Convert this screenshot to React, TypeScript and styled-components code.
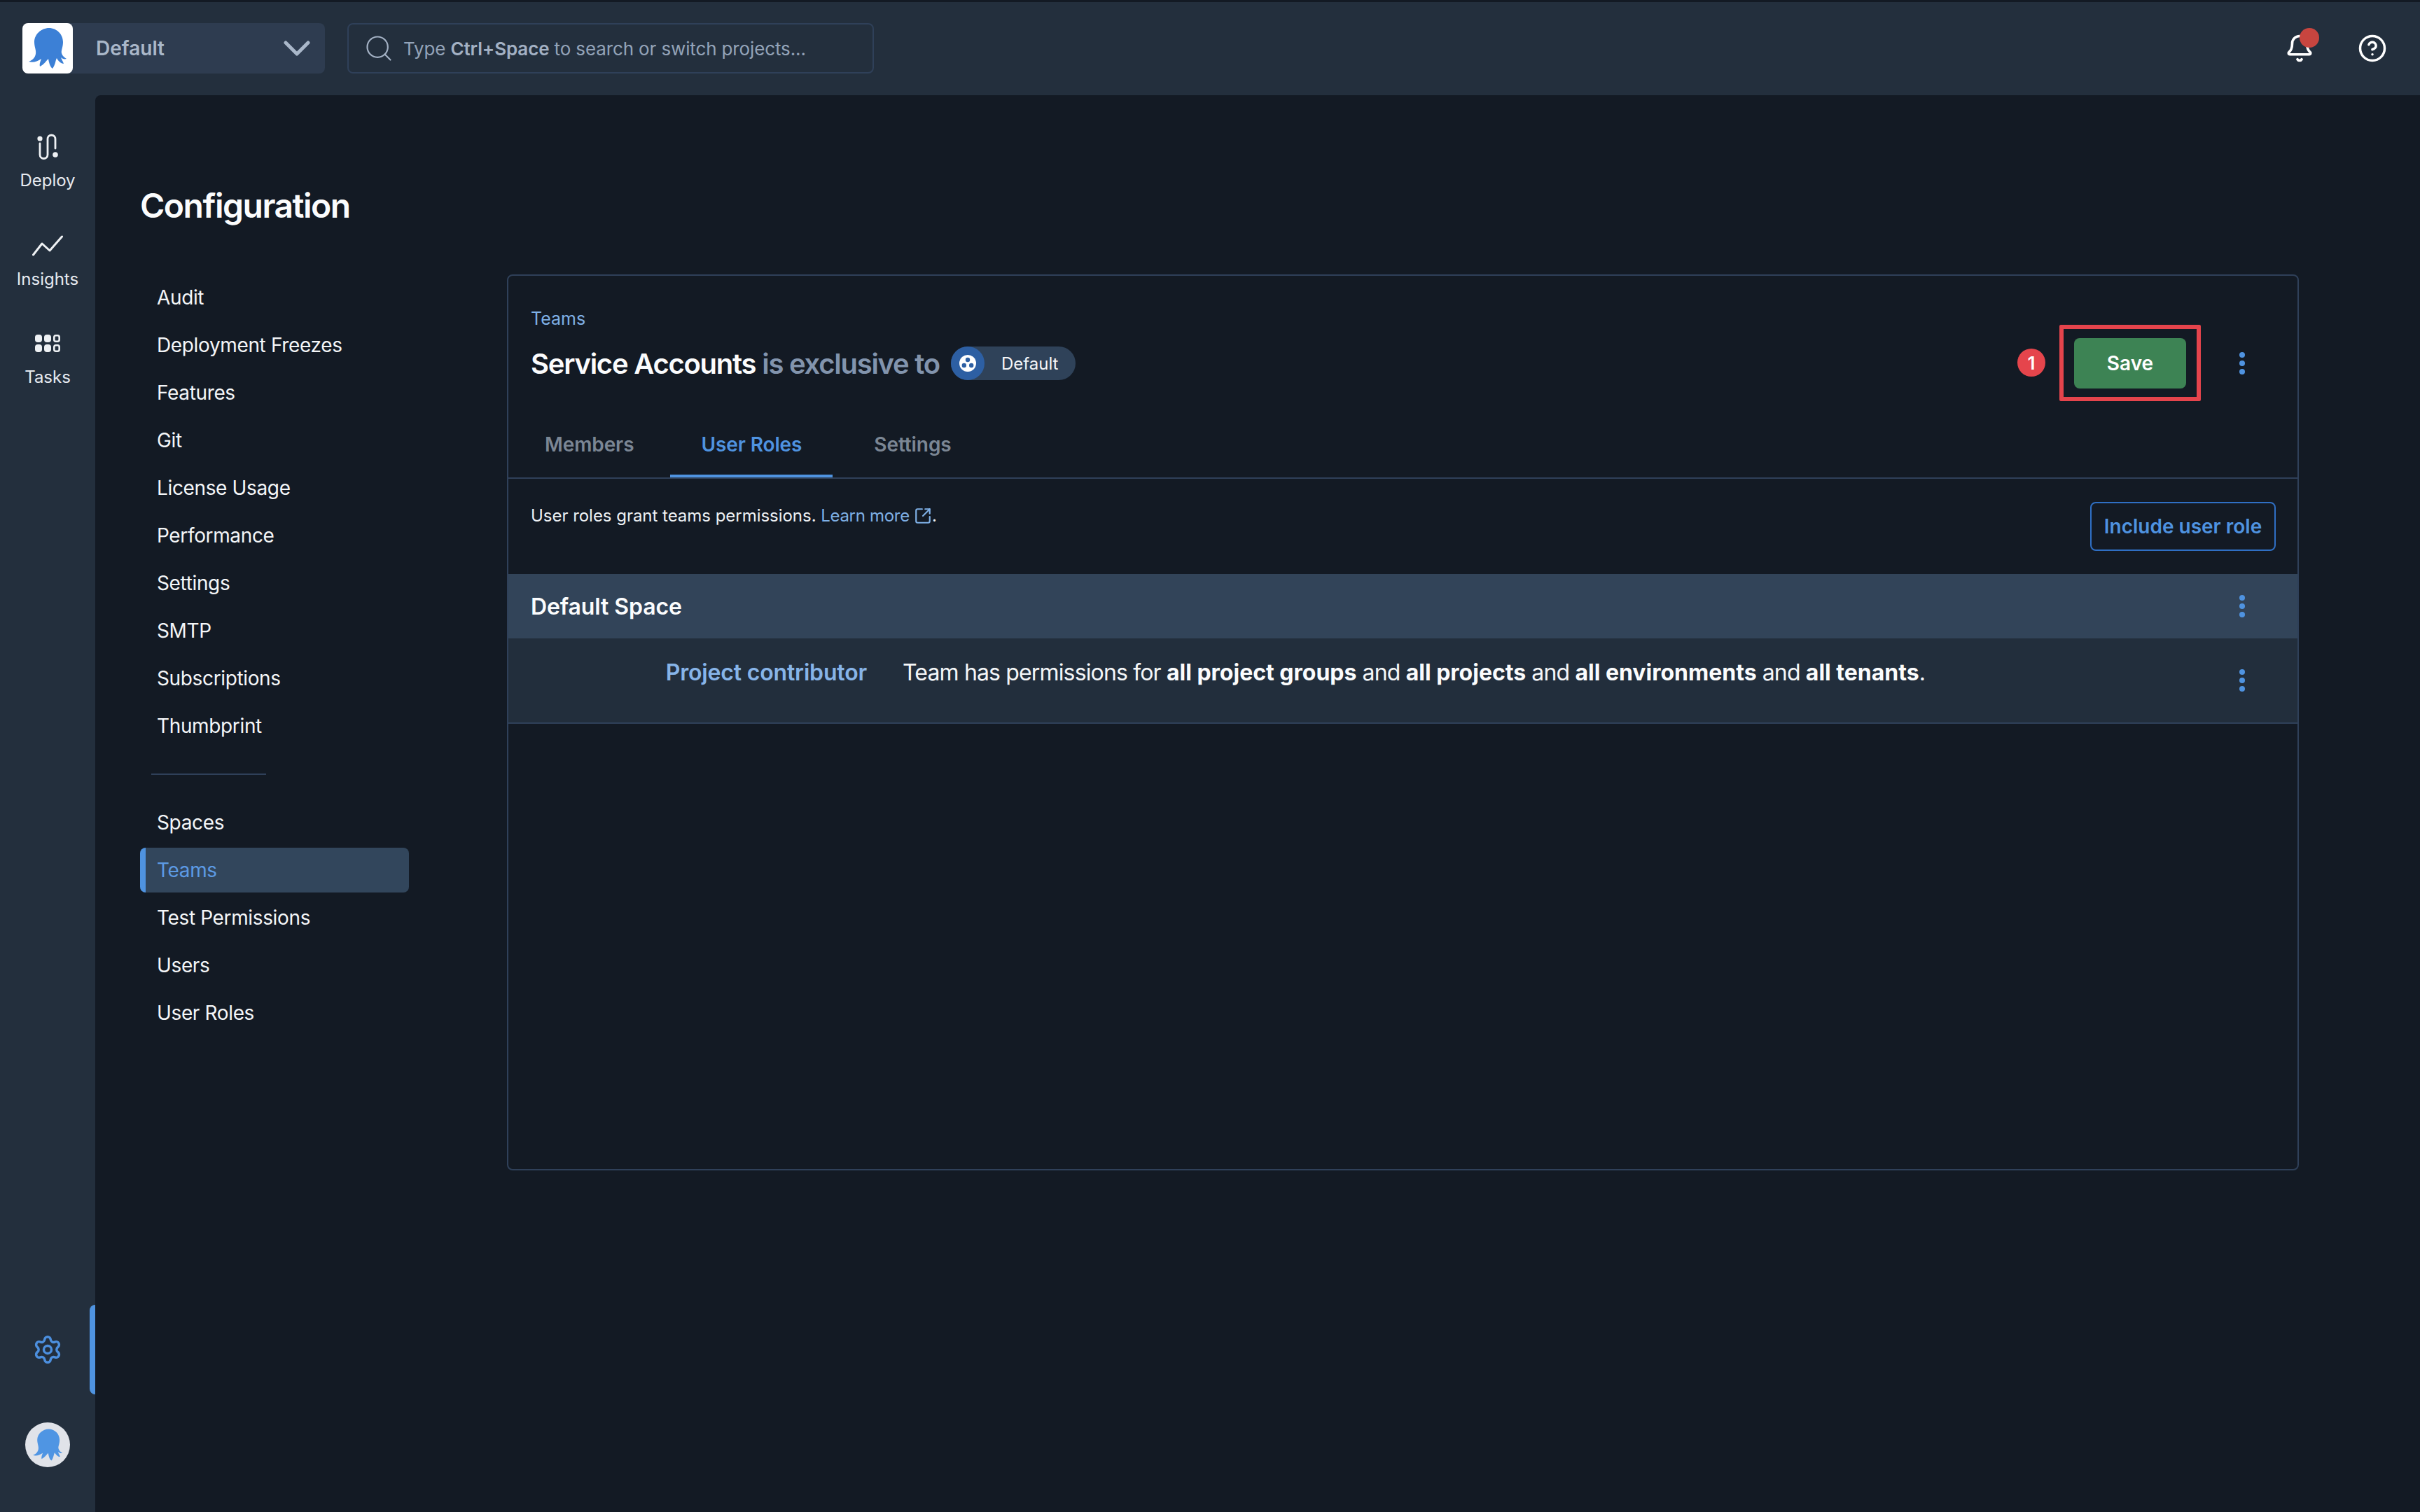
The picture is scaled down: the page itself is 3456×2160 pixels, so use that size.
import React from "react";
import styled, { createGlobalStyle } from "styled-components";
import { Bell, CircleHelp, Search, Settings, SquareArrowOutUpRight } from "lucide-react";

const Global = createGlobalStyle`
  html, body { margin: 0; padding: 0; background: #131a24; }
  body { font-family: Inter, "Liberation Sans", sans-serif; color: #f4f6f8; overflow: hidden; }
  * { box-sizing: border-box; }
`;

const Shell = styled.div`
  width: 3456px; height: 2160px; display: grid;
  grid-template-columns: 136px 1fr; grid-template-rows: 136px 1fr;
  background: #232f3d;
`;
const TopBar = styled.header`
  grid-column: 1 / 3; display: flex; align-items: center; padding: 0 47px 1px 32px;
  border-top: 3px solid #131a24; height: 136px;
`;
const LogoBox = styled.div`
  width: 72px; height: 72px; background: #fff; border-radius: 8px; flex: none; position: relative; z-index: 1;
`;
const Switcher = styled.div`
  width: 376px; height: 72px; margin-left: -16px; background: #2e3c50; border-radius: 0 8px 8px 0;
  display: flex; align-items: center; justify-content: space-between; padding: 0 21px 0 49px;
  color: #a9b7c9; font-size: 28px; font-weight: 600;
`;
const SearchBox = styled.div`
  width: 752px; height: 72px; margin-left: 32px; border: 2px solid #2f4059; border-radius: 8px;
  display: flex; align-items: center; padding: 0 0 0 21px; gap: 13px; color: #93a3b8; font-size: 26px; letter-spacing: -0.13px;
  b { font-weight: 600; color: #a3b1c4; }
`;
const RightIcons = styled.div`
  margin-left: auto; display: flex; align-items: center; gap: 62px; color: #fff;
`;
const BellWrap = styled.div`
  position: relative; width: 42px; height: 42px; display: flex;
  &::after { content: ""; position: absolute; width: 28px; height: 28px; border-radius: 50%; background: #c8453f; right: -7px; top: -8px; }
`;

const SideBar = styled.nav`
  display: flex; flex-direction: column; align-items: center; position: relative;
`;
const SideItem = styled.div<{ $top: number }>`
  margin-top: ${(p) => p.$top}px; display: flex; flex-direction: column; align-items: center; gap: 13px;
  font-size: 24px; color: #e6eaf0; line-height: 30px; width: 100%;
`;
const SideIcon = styled.svg<{ $w?: number }>`
  width: ${(p) => p.$w ?? 40}px; height: 40px; display: block; color: #eef1f4;
`;
const SettingsLink = styled.div`
  margin-top: auto; height: 128px; width: 100%; display: flex; align-items: center; justify-content: center; position: relative;
  color: #4c8fde;
  &::after { content: ""; position: absolute; right: 0; top: 0; bottom: 0; width: 8px; background: #4f93e0; border-radius: 8px 0 0 8px; }
`;
const Avatar = styled.div`
  width: 64px; height: 64px; border-radius: 50%; background: #e0e3e9; margin: 40px 0 64px;
  display: flex; align-items: center; justify-content: center;
`;

const Main = styled.main`
  background: #131a24; border-radius: 8px 0 0 0; padding: 132px 0 0 64px; min-width: 0;
`;
const PageTitle = styled.h1`
  margin: 0; font-size: 48px; line-height: 52px; font-weight: 600; color: #fbfcfd; letter-spacing: -1.5px;
`;
const Columns = styled.div`
  display: flex; margin-top: 73px; align-items: flex-start;
`;
const ConfigNav = styled.div`
  width: 384px; display: flex; flex-direction: column; gap: 4px; flex: none;
`;
const NavItem = styled.div<{ $active?: boolean }>`
  height: 64px; display: flex; align-items: center; font-size: 28px; padding-left: 16px; letter-spacing: -0.36px;
  border-left: 8px solid ${(p) => (p.$active ? "#4f93e0" : "transparent")};
  border-radius: 8px; color: ${(p) => (p.$active ? "#5c9ae4" : "#f4f6f8")};
  background: ${(p) => (p.$active ? "#32465c" : "transparent")};
`;
const NavDivider = styled.div`
  height: 2px; width: 164px; margin: 32px 0 32px 16px; background: #2f4059;
`;

const Card = styled.section`
  width: 2559px; height: 1280px; margin: -1px 0 0 140px; border: 2px solid #2f4059; border-radius: 8px; flex: none; display: flex; flex-direction: column;
`;
const CardHead = styled.div`
  padding: 46px 0 0 32px;
`;
const Crumb = styled.div`
  font-size: 25px; line-height: 30px; color: #7fb0e6;
`;
const TitleRow = styled.div`
  display: flex; align-items: center; height: 72px; margin-top: 13px;
`;
const Heading = styled.h2`
  margin: 0; font-size: 40px; font-weight: 600; color: #fbfcfd; letter-spacing: -1.25px; white-space: nowrap;
  span { color: #8294ad; }
`;
const Pill = styled.div`
  margin-left: 16px; height: 48px; width: 178px; border-radius: 24px; background: #2f4259; display: flex; align-items: center;
  color: #f4f6f8; font-size: 24px; gap: 24px;
`;
const PillIcon = styled.div`
  width: 48px; height: 48px; border-radius: 50%; background: #2d5fa3; display: flex; align-items: center; justify-content: center; flex: none;
`;
const Actions = styled.div`
  margin-left: auto; display: flex; align-items: center; padding-right: 55px;
`;
const Badge = styled.div`
  width: 40px; height: 40px; border-radius: 50%; background: #e5454c; color: #fff; font-weight: 600; font-size: 26px;
  display: flex; align-items: center; justify-content: center; margin: -2px 41px 0 0;
`;
const SaveWrap = styled.div`
  position: relative; margin-right: 56px;
  &::after { content: ""; position: absolute; inset: -19px -21px -18px; border: 6px solid #e5444c; border-radius: 2px; pointer-events: none; }
`;
const SaveButton = styled.button`
  width: 160px; height: 72px; background: #3d8354; border: 0; border-radius: 8px; color: #fff; font: 600 28px Inter, sans-serif; display: block;
`;
const More = styled.svg`
  width: 48px; height: 48px; flex: none; display: block; color: #4f93e0;
`;
const Tabs = styled.div`
  display: flex; height: 96px; margin-top: 33px; padding-left: 8px; gap: 8px; border-bottom: 2px solid #2f4059;
`;
const Tab = styled.div<{ $active?: boolean }>`
  height: 94px; padding: 4px 44px 0; display: flex; align-items: center; font-size: 28px; font-weight: 600; letter-spacing: -0.1px;
  color: ${(p) => (p.$active ? "#4f93e0" : "#7b8694")};
  border-bottom: 4px solid ${(p) => (p.$active ? "#4f93e0" : "transparent")};
  &:last-child { margin-left: 7px; }
`;
const Toolbar = styled.div`
  height: 136px; display: flex; justify-content: space-between; padding: 33px 31px 0 32px; align-items: flex-start;
`;
const Hint = styled.div`
  font-size: 24px; line-height: 34px; margin-top: 3px; color: #eef1f4; display: flex; align-items: center; white-space: pre; letter-spacing: -0.03px;
  a { color: #7fb0e6; display: inline-flex; align-items: center; gap: 6px; letter-spacing: -0.3px; }
`;
const OutlineButton = styled.button`
  width: 265px; height: 70px; background: transparent; border: 2px solid #2f6fc4; border-radius: 8px; color: #4f93e0; font: 600 28px Inter, sans-serif;
`;
const SpaceHeader = styled.div`
  height: 92px; background: #324459; display: flex; align-items: center; justify-content: space-between; padding: 0 55px 0 32px;
  font-size: 32px; font-weight: 600; color: #fbfcfd; letter-spacing: -0.1px;
`;
const RoleRow = styled.div`
  height: 122px; background: #222e3c; border-bottom: 2px solid #2f4059; display: flex; align-items: flex-start; padding-right: 55px;
`;
const RoleName = styled.div`
  width: 512px; flex: none; text-align: right; margin-top: 29px; font-size: 32px; line-height: 40px; font-weight: 600; color: #87b4e8; white-space: nowrap; letter-spacing: -0.17px;
`;
const RoleDesc = styled.div`
  margin: 29px 0 0 51px; flex: 1; font-size: 32px; line-height: 40px; color: #f4f6f8; white-space: nowrap; letter-spacing: -0.85px;
  b { font-weight: 700; color: #fbfcfd; letter-spacing: 0; }
`;
const RoleMore = styled.div`
  margin-top: 36px;
`;

const OCTOPUS = "M38 7C49 7 58 16 58 27C58 35 55 39 56 43C57 47 60 49 63 51C60 52 57 51 55 49C56 52 58 55 59 58C55 58 51 54 49 50C47 54 47 60 43 65C39 62 38 56 37 51C34 54 31 59 25 62C24 58 26 54 27 51C21 55 15 57 9 55C14 53 18 50 19 44C20 39 17 34 17 27C17 16 27 7 38 7Z";

const Dots = () => (
  <More viewBox="0 0 48 48" aria-hidden>
    <circle cx="24" cy="12" r="4" fill="currentColor" />
    <circle cx="24" cy="24" r="4" fill="currentColor" />
    <circle cx="24" cy="36" r="4" fill="currentColor" />
  </More>
);

const items1 = ["Audit", "Deployment Freezes", "Features", "Git", "License Usage", "Performance", "Settings", "SMTP", "Subscriptions", "Thumbprint"];
const items2 = ["Spaces", "Teams", "Test Permissions", "Users", "User Roles"];

export default function App() {
  return (
    <Shell>
      <Global />
      <TopBar>
        <LogoBox>
          <svg width="72" height="72" viewBox="0 0 72 72"><path d={OCTOPUS} fill="#3c80d6" /></svg>
        </LogoBox>
        <Switcher>
          Default
          <svg width="38" height="24" viewBox="0 0 38 24"><polyline points="3,4 19,20 35,4" fill="none" stroke="#a9b7c9" strokeWidth="5" strokeLinecap="round" strokeLinejoin="round" /></svg>
        </Switcher>
        <SearchBox>
          <Search size={44} strokeWidth={1.2} color="#a3b1c4" />
          <span>Type <b>Ctrl+Space</b> to search or switch projects...</span>
        </SearchBox>
        <RightIcons>
          <BellWrap><Bell size={42} strokeWidth={2.1} /></BellWrap>
          <CircleHelp size={42} strokeWidth={2} />
        </RightIcons>
      </TopBar>
      <SideBar>
        <SideItem $top={54}>
          <SideIcon viewBox="0 0 40 40" fill="none" stroke="currentColor" strokeWidth="2.8" strokeLinecap="round">
            <path d="M9 15V31a5.5 5.5 0 0 0 11 0V8.5a5.5 5.5 0 0 1 11 0V22" />
            <circle cx="9" cy="8" r="3.6" fill="currentColor" stroke="none" />
            <circle cx="31" cy="31" r="3.8" fill="currentColor" stroke="none" />
          </SideIcon>
          Deploy
        </SideItem>
        <SideItem $top={58}>
          <SideIcon $w={44} viewBox="0 0 44 40" fill="none" stroke="currentColor" strokeWidth="3" strokeLinecap="round" strokeLinejoin="round">
            <polyline points="1.5,33 14,17 25,27 42.5,7" />
          </SideIcon>
          Insights
        </SideItem>
        <SideItem $top={57}>
          <SideIcon viewBox="0 0 40 40">
            <g fill="currentColor">
              <rect x="2" y="7" width="10" height="11" rx="4" />
              <rect x="15" y="7" width="10" height="11" rx="4" />
              <rect x="2" y="21" width="10" height="11" rx="4" />
              <rect x="15" y="21" width="10" height="11" rx="4" />
            </g>
            <g fill="none" stroke="currentColor" strokeWidth="2.6">
              <rect x="29.3" y="8.3" width="7.4" height="8.4" rx="2.5" />
              <rect x="29.3" y="22.3" width="7.4" height="8.4" rx="2.5" />
            </g>
          </SideIcon>
          Tasks
        </SideItem>
        <SettingsLink><Settings size={44} strokeWidth={1.9} /></SettingsLink>
        <Avatar>
          <svg width="56" height="56" viewBox="0 0 72 72"><path d={OCTOPUS} fill="#4f95e3" /></svg>
        </Avatar>
      </SideBar>
      <Main>
        <PageTitle>Configuration</PageTitle>
        <Columns>
          <ConfigNav>
            {items1.map((t) => <NavItem key={t}>{t}</NavItem>)}
            <NavDivider />
            {items2.map((t) => <NavItem key={t} $active={t === "Teams"}>{t}</NavItem>)}
          </ConfigNav>
          <Card>
            <CardHead>
              <Crumb>Teams</Crumb>
              <TitleRow>
                <Heading>Service Accounts <span>is exclusive to</span></Heading>
                <Pill>
                  <PillIcon>
                    <svg width="26" height="26" viewBox="0 0 26 26">
                      <circle cx="13" cy="13" r="12" fill="#fff" />
                      <circle cx="13" cy="8" r="3.2" fill="#2d5fa3" />
                      <circle cx="7.8" cy="16" r="3.2" fill="#2d5fa3" />
                      <circle cx="18.2" cy="16" r="3.2" fill="#2d5fa3" />
                    </svg>
                  </PillIcon>
                  Default
                </Pill>
                <Actions>
                  <Badge>1</Badge>
                  <SaveWrap><SaveButton>Save</SaveButton></SaveWrap>
                  <Dots />
                </Actions>
              </TitleRow>
            </CardHead>
            <Tabs>
              <Tab>Members</Tab>
              <Tab $active>User Roles</Tab>
              <Tab>Settings</Tab>
            </Tabs>
            <Toolbar>
              <Hint>User roles grant teams permissions. <a>Learn more<SquareArrowOutUpRight size={26} strokeWidth={2} /></a>.</Hint>
              <OutlineButton>Include user role</OutlineButton>
            </Toolbar>
            <SpaceHeader>Default Space<Dots /></SpaceHeader>
            <RoleRow>
              <RoleName>Project contributor</RoleName>
              <RoleDesc>Team has permissions for <b>all project groups</b> and <b>all projects</b> and <b>all environments</b> and <b>all tenants</b>.</RoleDesc>
              <RoleMore><Dots /></RoleMore>
            </RoleRow>
          </Card>
        </Columns>
      </Main>
    </Shell>
  );
}
